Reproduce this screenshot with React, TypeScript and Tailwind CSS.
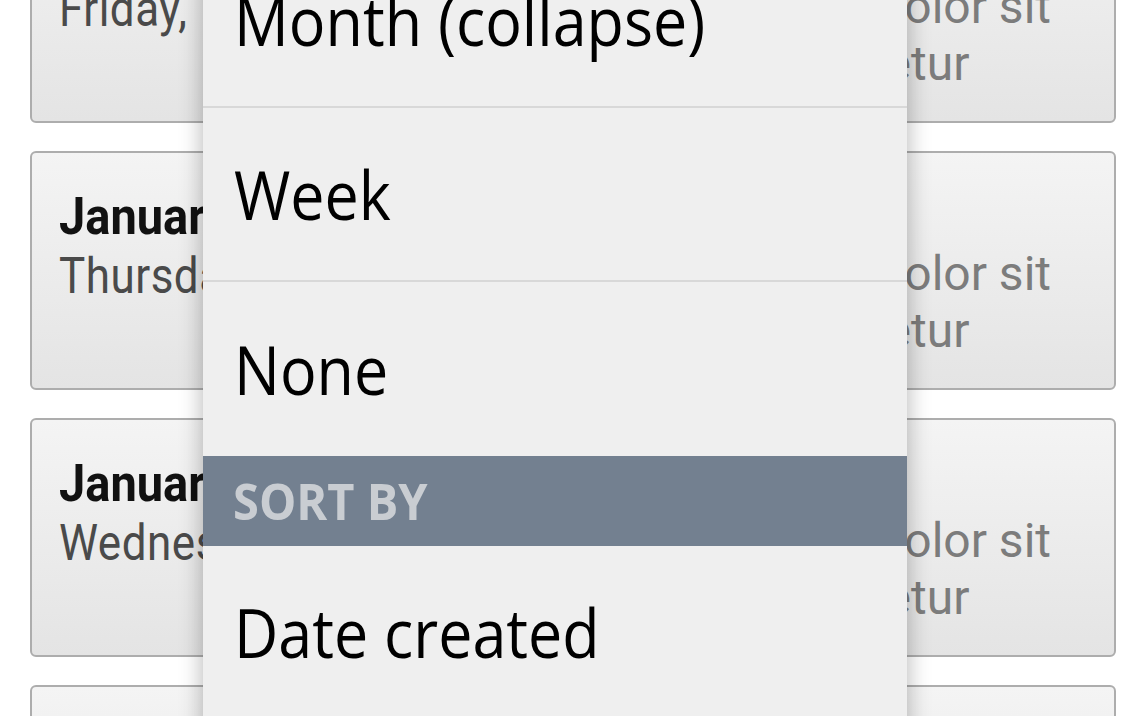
import React from "react";

const entries = [
  { title: "January 11, 2013", sub: "Friday, 11:20 AM" },
  { title: "January 10, 2013", sub: "Thursday, 9:42 AM" },
  { title: "January 9, 2013", sub: "Wednesday, 2:08 PM" },
  { title: "January 8, 2013", sub: "Tuesday, 7:30 PM" },
];

function EntryCard({ title, sub }: { title: string; sub: string }) {
  return (
    <div className="h-[239px] shrink-0 rounded-[6px] border-2 border-[#adadad] bg-gradient-to-b from-[#f4f4f4] to-[#e4e4e4] flex justify-between pl-[27px] pr-[63px] font-['Roboto',sans-serif] whitespace-nowrap">
      <div className="pt-[38px]">
        <div className="scale-y-[1.12]">
          <div className="text-[47px] font-bold leading-[55px] text-[#111]">{title}</div>
          <div className="text-[44px] tracking-[0.5px] leading-[55px] text-[#4a4a4a]">{sub}</div>
        </div>
      </div>
      <div className="pt-[92px] text-[48px] leading-[57px] text-[#7c7c7c]">
        Lorem ipsum dolor sit
        <br />
        amet, consectetur
      </div>
    </div>
  );
}

function MenuItem({ label, divider = true }: { label: string; divider?: boolean }) {
  return (
    <div
      className={`h-[174px] shrink-0 flex items-center pl-[31px] text-[61px] text-black ${
        divider ? "border-b-2 border-[#d8d8d8]" : ""
      }`}
    >
      <span className="inline-block scale-y-[1.11]">{label}</span>
    </div>
  );
}

export default function App() {
  return (
    <div className="relative h-[716px] w-[1146px] overflow-hidden bg-white">
      <div className="flex flex-col gap-[28px] px-[30px] mt-[-116px]">
        {entries.map((e) => (
          <EntryCard key={e.title} title={e.title} sub={e.sub} />
        ))}
      </div>

      {/* popup menu */}
      <div className="absolute top-[-66px] left-[203px] w-[704px] h-[900px] bg-[#efefef] shadow-[0_0_22px_rgba(0,0,0,0.3)] flex flex-col font-['Open_Sans',sans-serif]">
        <MenuItem label="Month (collapse)" />
        <MenuItem label="Week" />
        <MenuItem label="None" divider={false} />
        <div className="h-[90px] shrink-0 bg-[#738090] flex items-center pl-[30px] text-[47px] font-bold text-[#c9cdd2]">
          <span className="inline-block scale-y-[1.08]">SORT BY</span>
        </div>
        <MenuItem label="Date created" />
        <MenuItem label="Date modified" />
      </div>
    </div>
  );
}
